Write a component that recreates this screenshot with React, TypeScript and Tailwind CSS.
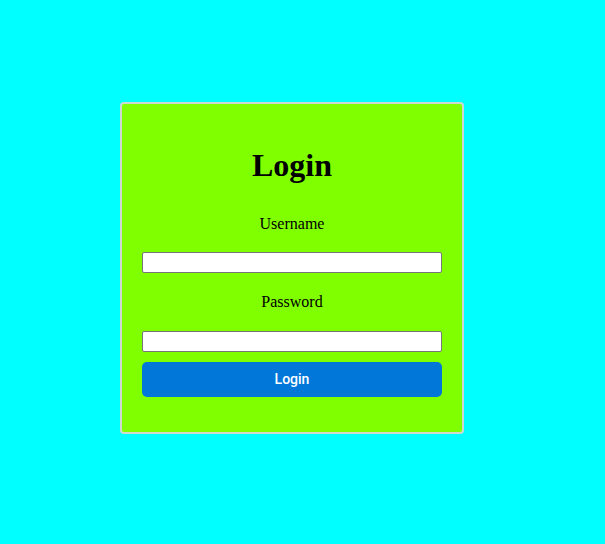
export default function App() {
  return (
    <div className="min-h-screen w-full bg-[#00ffff] pt-[102px] pl-[120px]">
      <div className="w-[344px] border-2 border-[#cfd8cf] rounded-[4px] bg-[#80ff00] px-[20px] pt-[43px] pb-[35px] flex flex-col" style={{ fontFamily: '"Liberation Serif", "Times New Roman", serif' }}>
        <h1 className="text-[32px] leading-[36px] font-bold text-center text-black m-0">Login</h1>
        <label className="mt-[32px] text-[16px] leading-[18px] text-center text-black">Username</label>
        <input type="text" className="mt-[19px] w-[300px] h-[21px] bg-white border border-[#767676] rounded-[2px] outline-none" />
        <label className="mt-[20px] text-[16px] leading-[18px] text-center text-black">Password</label>
        <input type="password" className="mt-[20px] w-[300px] h-[21px] bg-white border border-[#767676] rounded-[2px] outline-none" />
        <button className="mt-[10px] w-[300px] h-[35px] rounded-[5px] bg-[#0077d9] text-white text-[14px] font-medium flex items-center justify-center" style={{ fontFamily: 'Roboto, "Liberation Sans", Arial, sans-serif' }}>Login</button>
      </div>
    </div>
  );
}
